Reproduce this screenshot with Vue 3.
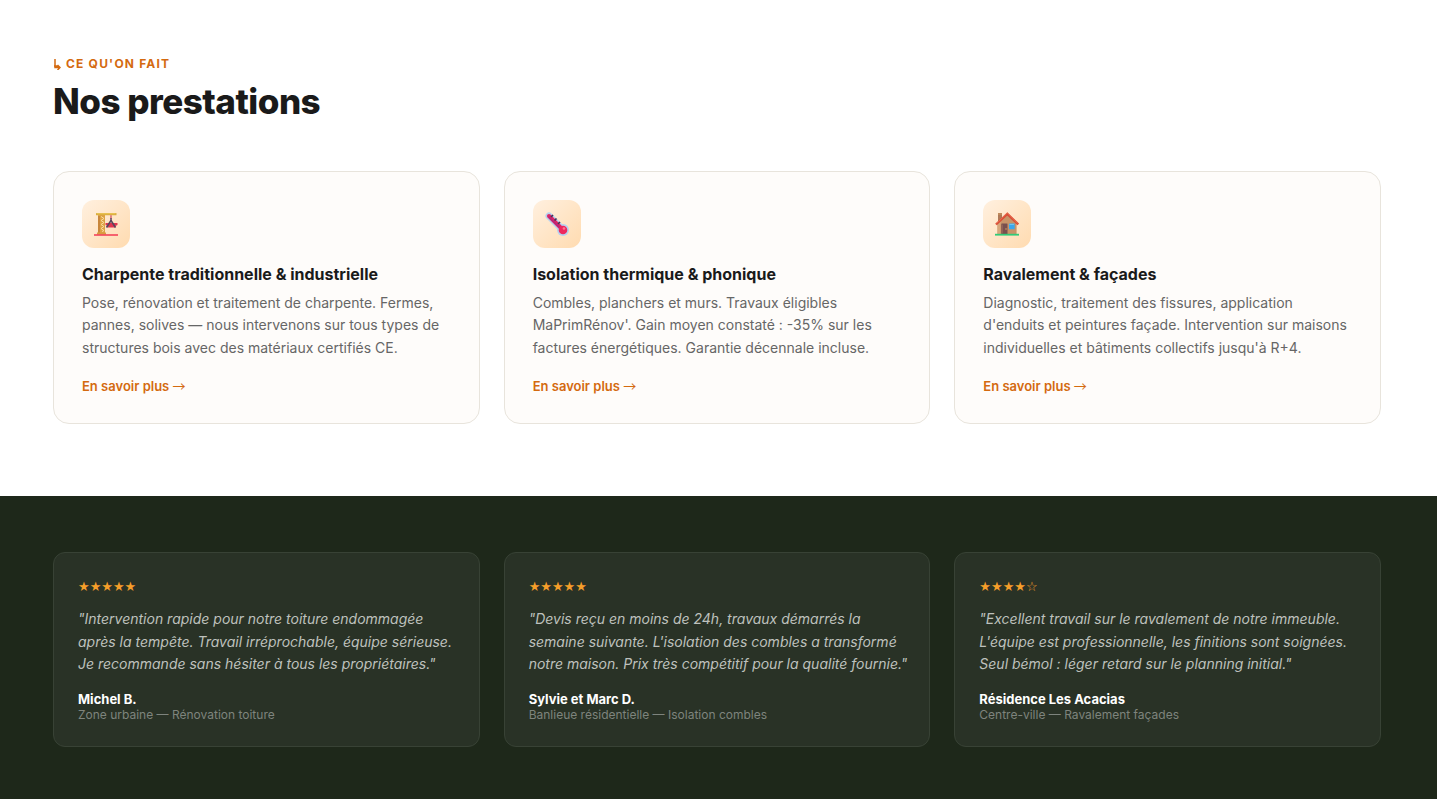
<script setup>
const services = [
  {
    icon: 'crane',
    title: 'Charpente traditionnelle & industrielle',
    text: 'Pose, rénovation et traitement de charpente. Fermes, pannes, solives — nous intervenons sur tous types de structures bois avec des matériaux certifiés CE.'
  },
  {
    icon: 'thermometer',
    title: 'Isolation thermique & phonique',
    text: "Combles, planchers et murs. Travaux éligibles MaPrimRénov'. Gain moyen constaté : -35% sur les factures énergétiques. Garantie décennale incluse."
  },
  {
    icon: 'house',
    title: 'Ravalement & façades',
    text: "Diagnostic, traitement des fissures, application d'enduits et peintures façade. Intervention sur maisons individuelles et bâtiments collectifs jusqu'à R+4."
  }
]

const reviews = [
  {
    stars: '★★★★★',
    quote: '"Intervention rapide pour notre toiture endommagée après la tempête. Travail irréprochable, équipe sérieuse. Je recommande sans hésiter à tous les propriétaires."',
    author: 'Michel B.',
    detail: 'Zone urbaine — Rénovation toiture'
  },
  {
    stars: '★★★★★',
    quote: '"Devis reçu en moins de 24h, travaux démarrés la semaine suivante. L\'isolation des combles a transformé notre maison. Prix très compétitif pour la qualité fournie."',
    author: 'Sylvie et Marc D.',
    detail: 'Banlieue résidentielle — Isolation combles'
  },
  {
    stars: '★★★★☆',
    quote: '"Excellent travail sur le ravalement de notre immeuble. L\'équipe est professionnelle, les finitions sont soignées. Seul bémol : léger retard sur le planning initial."',
    author: 'Résidence Les Acacias',
    detail: 'Centre-ville — Ravalement façades'
  }
]
</script>

<template>
  <main class="page">
    <section class="services">
      <p class="eyebrow">
        <svg class="turn" viewBox="0 0 8 12" aria-hidden="true">
          <path d="M2 1v8.500h5M4.500 7l2.500 2.500-2.500 2.500M1 8h4" fill="none" stroke="currentColor" stroke-width="1.500" />
        </svg>
        Ce qu'on fait
      </p>
      <h2 class="heading">Nos prestations</h2>
      <div class="grid">
        <article v-for="s in services" :key="s.title" class="service">
          <div class="icon">
            <svg v-if="s.icon === 'crane'" viewBox="0 -1 24 24" aria-hidden="true">
              <rect x="4" y="2" width="7" height="19" fill="#dda144" />
              <path d="M5 3v17" stroke="#c17e39" stroke-width="1.500" />
              <path d="M7 3.500l3 2-3 2 3 2-3 2 3 2-3 2 3 2-2 1" fill="none" stroke="#f8dda0" stroke-width="1" />
              <rect x="2" y="0" width="20.500" height="2.300" rx="0.500" fill="#d9ac3d" />
              <path d="M3 0.700h18.500" stroke="#efcb5d" stroke-width="0.800" />
              <path d="M17 2.300v4" stroke="#ce4358" stroke-width="1.200" />
              <path d="M17 5v3" stroke="#65566d" stroke-width="1.600" />
              <path d="M11.500 10h12v2l-2 1v1.500h-8v-1.500l-2-1z" fill="#df3650" />
              <path d="M17 7.500l-4.500 7M17 7.500l4.500 7" fill="none" stroke="#57485d" stroke-width="1.600" />
              <rect x="3" y="19.500" width="9" height="2" fill="#d99b41" />
              <path d="M0 22h24" stroke="#f22c4b" stroke-width="1.400" />
            </svg>
            <svg v-else-if="s.icon === 'thermometer'" viewBox="0 0 24 24" aria-hidden="true">
              <path d="M4 4L18 18" stroke="#b6d1ef" stroke-width="7" stroke-linecap="round" />
              <circle cx="18" cy="18" r="6" fill="#b6d1ef" />
              <path d="M4 4L17 17" stroke="#df2665" stroke-width="4" stroke-linecap="round" />
              <path d="M4 5l11 11" stroke="#b62679" stroke-width="1.500" stroke-linecap="round" />
              <circle cx="18" cy="18" r="4.300" fill="#ee285d" />
              <circle cx="19" cy="16.500" r="1.300" fill="#ff7891" />
              <path d="M6 5l2-2M9.500 8.500l2-2M13 12l2-2" stroke="#453457" stroke-width="1.700" />
            </svg>
            <svg v-else viewBox="0 0 24 24" aria-hidden="true">
              <path d="M3 1.500h4v10H3z" fill="#ae7956" />
              <path d="M3 1h4v2H3z" fill="#bf8a5c" />
              <path d="M2.500 11.500L12.300 2l9.300 9.500v11H2.500z" fill="#c89468" />
              <path d="M2.500 11.500l3-3v14h-3z" fill="#d7a77b" />
              <path d="M1 12.500L12.300 1.800 23.300 12.500" fill="none" stroke="#d84e37" stroke-width="2.400" />
              <path d="M1.500 11.500L12.300 1l10.500 10.500" fill="none" stroke="#ef7151" stroke-width="0.800" />
              <rect x="6.300" y="11.500" width="6.200" height="11" rx="0.500" fill="#79504e" />
              <path d="M7.500 12.500v9" stroke="#916256" stroke-width="1" />
              <circle cx="11" cy="17" r="0.700" fill="#e2b069" />
              <rect x="14" y="11.500" width="5.700" height="5.700" rx="0.500" fill="#3ca6eb" />
              <path d="M14.500 12.500h4.500" stroke="#66c4f4" stroke-width="1" />
              <path d="M0 22.700h24" stroke="#32cb78" stroke-width="1.800" />
            </svg>
          </div>
          <h3>{{ s.title }}</h3>
          <p class="text">{{ s.text }}</p>
          <a href="#" class="more">En savoir plus <span class="arrow">→</span></a>
        </article>
      </div>
    </section>

    <section class="reviews">
      <div class="grid">
        <article v-for="r in reviews" :key="r.author" class="review">
          <div class="stars">{{ r.stars }}</div>
          <p class="quote">{{ r.quote }}</p>
          <div class="author">{{ r.author }}</div>
          <div class="detail">{{ r.detail }}</div>
        </article>
      </div>
    </section>
  </main>
</template>

<style>
body {
  margin: 0;
  background: #ffffff;
}
</style>

<style scoped>
.page {
  font-family: Inter, "Liberation Sans", sans-serif;
  color: #1a1a1a;
}
h2, h3, p {
  margin: 0;
}
.services {
  padding: 56px 56px 72px 53px;
}
.eyebrow {
  display: flex;
  align-items: center;
  gap: 5px;
  font-size: 12px;
  line-height: 16px;
  font-weight: 700;
  letter-spacing: 0.1em;
  text-transform: uppercase;
  color: #d46a10;
  margin-bottom: 8px;
}
.turn {
  width: 8px;
  height: 12px;
}
.heading {
  font-size: 35px;
  line-height: 43px;
  font-weight: 800;
  letter-spacing: -0.5px;
  margin-bottom: 48px;
}
.grid {
  display: grid;
  grid-template-columns: repeat(3, 1fr);
  gap: 24px;
}
.service {
  box-sizing: border-box;
  padding: 28px;
  border: 1px solid #e8e4dc;
  border-radius: 16px;
  background: #fefcfa;
}
.icon {
  width: 48px;
  height: 48px;
  margin-bottom: 16px;
  border-radius: 12px;
  background: linear-gradient(135deg, #fff0df, #ffdbb0);
  display: flex;
  align-items: center;
  justify-content: center;
}
.icon svg {
  width: 24px;
  height: 24px;
}
h3 {
  font-size: 16px;
  line-height: 20px;
  font-weight: 700;
  margin-bottom: 8px;
}
.text {
  font-size: 14px;
  line-height: 1.6;
  color: #666666;
  margin-bottom: 19px;
}
.more {
  display: block;
  font-size: 13px;
  line-height: 16px;
  font-weight: 600;
  color: #d46a10;
  text-decoration: none;
  padding-bottom: 1px;
}
.arrow {
  font-family: "Noto Sans CJK JP", sans-serif;
  font-weight: 400;
  line-height: 1;
}
.reviews {
  padding: 56px 56px 52px 53px;
  background: #1e281a;
}
.review {
  box-sizing: border-box;
  padding: 24px 20px 24px 24px;
  border: 1px solid #384235;
  border-radius: 12px;
  background: #293226;
}
.stars {
  font-family: "DejaVu Sans", sans-serif;
  font-size: 13px;
  line-height: 19px;
  color: #f59e2a;
  margin-bottom: 12px;
}
.quote {
  font-size: 14px;
  line-height: 1.6;
  font-style: italic;
  color: #bec1bd;
  margin-bottom: 16px;
}
.author {
  font-size: 13px;
  line-height: 16px;
  font-weight: 700;
  color: #ffffff;
}
.detail {
  font-size: 12px;
  line-height: 15px;
  color: #7e847d;
}
</style>
